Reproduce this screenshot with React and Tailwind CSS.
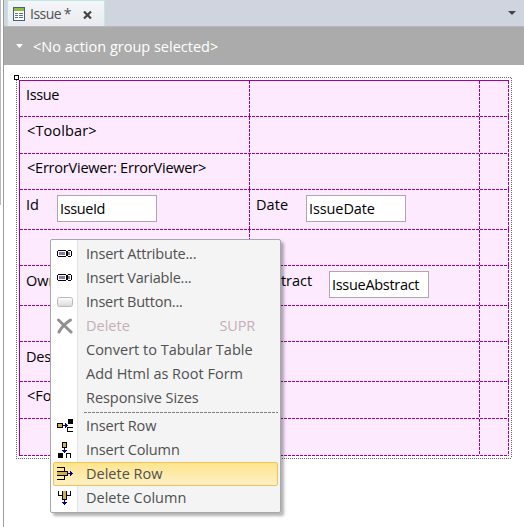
const COLS = 'grid grid-cols-[230px_230px_29px]';

const H_DASH = 'bg-[repeating-linear-gradient(90deg,#a000a0_0_3px,transparent_3px_4px)]';
const V_DASH = 'bg-[repeating-linear-gradient(180deg,#a000a0_0_3px,transparent_3px_4px)]';

function Cell({ children }) {
  return (
    <div className="flex min-w-0">
      <div className="flex min-w-0 flex-1 items-start">{children}</div>
      <div className={`w-px shrink-0 ${V_DASH}`} />
    </div>
  );
}

function Row({ height, left, right }) {
  return (
    <div className={`flex flex-col ${height}`}>
      <div className={`${COLS} min-h-0 flex-1`}>
        <Cell>{left}</Cell>
        <Cell>{right}</Cell>
        <Cell />
      </div>
      <div className={`h-px shrink-0 ${H_DASH}`} />
    </div>
  );
}

function Label({ className = '', children }) {
  return <span className={`ml-[6px] mt-[4px] whitespace-nowrap leading-[20px] ${className}`}>{children}</span>;
}

function Field({ className = '', children }) {
  return (
    <div className={`mt-[5px] h-[27px] w-[100px] shrink-0 whitespace-nowrap border border-[#aba6b0] bg-white pl-[2px] leading-[25px] ${className}`}>
      {children}
    </div>
  );
}

const VariableIcon = () => (
  <svg width="16" height="16" shapeRendering="crispEdges">
    <path d="M1 4h8v1H1zM1 10h8v1H1zM0 5h1v5H0zM9 5h1v5H9zM11 4h3v1h-3zM11 10h3v1h-3zM10 5h1v5h-1zM14 5h1v5h-1z" fill="#000" />
    <path d="M1 5h8v5H1zM11 5h3v5h-3z" fill="#fff" />
    <path d="M2 6h6v3H2zM11 6h2v3h-2z" fill="#8179a6" />
  </svg>
);

const ButtonIcon = () => (
  <svg width="17" height="16">
    <defs>
      <linearGradient id="btn" x1="0" y1="0" x2="0" y2="1">
        <stop offset="0" stopColor="#fff" />
        <stop offset="1" stopColor="#d9d9d9" />
      </linearGradient>
    </defs>
    <rect x="0.5" y="3.5" width="15" height="9" rx="2" fill="url(#btn)" stroke="#b9b9b9" />
  </svg>
);

const DeleteIcon = () => (
  <svg width="16" height="16">
    <path d="M1.5 2L14 14M13.5 2C9 5 4 10 2 14" stroke="#919191" strokeWidth="3" strokeLinecap="round" fill="none" />
  </svg>
);

const InsertRowIcon = () => (
  <svg width="17" height="16" shapeRendering="crispEdges">
    <path d="M0 5h6v5H0z" fill="#000" />
    <path d="M1 6h4v3H1z" fill="#d6ae49" />
    <path d="M6 7h5v1H6zM8 5h1v5H8zM9 6h1v3H9z" fill="#00008b" />
    <path d="M11 1h5v5h-5zM10 9h6v1h-6zM10 13h6v1h-6zM10 9h1v5h-1z" fill="#000" />
  </svg>
);

const InsertColumnIcon = () => (
  <svg width="16" height="18" shapeRendering="crispEdges">
    <path d="M5 1h5v6H5z" fill="#000" />
    <path d="M6 2h3v4H6z" fill="#d6ae49" />
    <path d="M7 7h1v5H7zM5 9h5v1H5zM6 10h3v1H6z" fill="#00008b" />
    <path d="M1 12h5v5H1zM9 12h4v1H9zM9 12h1v5H9zM13 12h1v5h-1z" fill="#000" />
  </svg>
);

const DeleteRowIcon = () => (
  <svg width="17" height="16" shapeRendering="crispEdges">
    <path d="M0 1h8v1H0zM7 1h1v4H7zM0 5h11v1H0zM0 9h11v1H0zM10 5h1v5h-1zM7 10h1v4H7zM0 13h8v1H0z" fill="#000" />
    <path d="M0 6h10v3H0z" fill="#d6ae49" />
    <path d="M11 7h5v1h-5zM13 5h1v5h-1zM14 6h1v3h-1z" fill="#00008b" />
  </svg>
);

const DeleteColumnIcon = () => (
  <svg width="16" height="16" shapeRendering="crispEdges">
    <path d="M1 1h1v5H1zM1 5h4v1H1zM5 1h1v9H5zM9 1h1v9H9zM5 9h5v1H5zM10 5h4v1h-4zM13 1h1v5h-1z" fill="#000" />
    <path d="M6 1h3v8H6z" fill="#d6ae49" />
    <path d="M7 10h1v5H7zM5 12h5v1H5zM6 13h3v1H6z" fill="#00008b" />
  </svg>
);

function MenuItem({ icon, label, shortcut, active, disabled, tracking = '' }) {
  return (
    <div
      className={`flex h-6 items-center ${
        active ? 'rounded-[2px] border border-[#eec254] bg-gradient-to-b from-[#ffe58d] to-[#fdf0c4] px-0' : 'px-px'
      } ${disabled ? 'text-[#c7adb9]' : 'text-[#505050]'}`}
    >
      <div className="flex w-8 items-center pl-[3px]">{icon}</div>
      <span className={`whitespace-nowrap leading-[20px] ${tracking}`}>{label}</span>
      {shortcut && <span className="ml-auto mr-[22px] leading-[20px] tracking-[-0.2px]">{shortcut}</span>}
    </div>
  );
}

function ContextMenu() {
  return (
    <div className="absolute left-[50px] top-[239px] h-[274px] w-[231px] rounded-[2px] border border-[#a3a7ae] bg-[linear-gradient(90deg,#fff_0_26px,#e3e4e6_26px_27px,#f4f4f4_27px)] px-[2px] pt-[2px] shadow-[3px_3px_3px_rgba(0,0,0,0.3)]">
      <MenuItem icon={<VariableIcon />} label="Insert Attribute..." tracking="tracking-[-0.22px]" />
      <MenuItem icon={<VariableIcon />} label="Insert Variable..." tracking="tracking-[-0.22px]" />
      <MenuItem icon={<ButtonIcon />} label="Insert Button..." tracking="tracking-[-0.25px]" />
      <MenuItem icon={<DeleteIcon />} label="Delete" shortcut="SUPR" disabled />
      <MenuItem label="Convert to Tabular Table" />
      <MenuItem label="Add Html as Root Form" />
      <MenuItem label="Responsive Sizes" tracking="tracking-[-0.06px]" />
      <div className="flex h-1 items-center pl-[31px]">
        <div className="h-px flex-1 bg-[repeating-linear-gradient(90deg,#808080_0_3px,transparent_3px_4px)]" />
      </div>
      <MenuItem icon={<InsertRowIcon />} label="Insert Row" tracking="tracking-[-0.15px]" />
      <MenuItem icon={<InsertColumnIcon />} label="Insert Column" tracking="tracking-[-0.15px]" />
      <MenuItem icon={<DeleteRowIcon />} label="Delete Row" active />
      <MenuItem icon={<DeleteColumnIcon />} label="Delete Column" />
    </div>
  );
}

function FormIcon() {
  return (
    <svg width="12" height="14" shapeRendering="crispEdges" className="shrink-0">
      <path d="M0 0h12v14H0z" fill="#3f6288" />
      <path d="M1 4h10v9H1z" fill="#fff" />
      <path d="M1 1h10v3H1z" fill="#91bd35" />
      <path d="M2 6h3v1H2zM2 8h3v1H2zM2 10h3v1H2zM6 6h4v1H6zM6 8h4v1H6zM6 10h4v1H6z" fill="#5b7190" />
    </svg>
  );
}

export default function App() {
  return (
    <div className="relative flex h-[527px] w-[524px] overflow-hidden bg-white font-['Open_Sans','Noto_Sans',sans-serif] text-[14.5px] text-black">
      <div className="flex w-[3px] shrink-0 flex-col">
        <div className="h-[205px] border-l border-[#b9b9b9]" />
      </div>
      <div className="flex min-w-0 flex-1 flex-col border-l border-[#9b9b9b]">
        <div className="flex h-[26px] shrink-0 justify-between bg-[#d0d4de]">
          <div className="ml-[3px] flex w-[98px] items-center rounded-t-[2px] border-x border-t border-[#c2e8e6] bg-gradient-to-b from-[#f5f6f9] to-[#e9ebf0] pl-[5px]">
            <FormIcon />
            <span className="ml-[5px] mt-px text-[14px] leading-[24px] tracking-[-0.5px] text-[#505050]">Issue</span>
            <span className="ml-[2.5px] mt-px text-[14px] leading-[24px] text-[#505050]">*</span>
            <svg width="9" height="8" className="ml-auto mr-[12px] mt-[2px]">
              <path d="M1 0.5L8 7.5M8 0.5L1 7.5" stroke="#444" strokeWidth="2.2" />
            </svg>
          </div>
          <svg width="8" height="4" className="mr-[8px] mt-[11px]">
            <path d="M0 0h8L4 4z" fill="#444" />
          </svg>
        </div>
        <div className="flex h-[39px] shrink-0 items-center border-t border-[#b9b9b9] bg-[#ababab] text-white">
          <svg width="8" height="4" className="ml-3">
            <path d="M0 0h7L3.5 4z" fill="#fff" />
          </svg>
          <span className="ml-[9px] mt-[2px] leading-[20px]">&lt;No action group selected&gt;</span>
        </div>
        <div className="relative ml-3 mt-3 flex h-[382px] w-[496px] flex-col">
          <div className="h-px shrink-0 bg-[repeating-linear-gradient(90deg,#666_0_1px,transparent_1px_2px)]" />
          <div className="flex min-h-0 flex-1">
            <div className="w-px bg-[repeating-linear-gradient(180deg,#666_0_1px,transparent_1px_2px)]" />
            <div className="flex flex-1 flex-col p-[2px]">
              <div className="flex flex-col border-l border-t border-[#a000a0] bg-[#fdeaff]">
                <Row height="h-[36px]" left={<Label className="tracking-[-0.4px]">Issue</Label>} />
                <Row height="h-[37px]" left={<Label className="pl-px tracking-[0.12px]">&lt;Toolbar&gt;</Label>} />
                <Row height="h-[36px]" left={<Label className="pl-px tracking-[-0.22px]">&lt;ErrorViewer: ErrorViewer&gt;</Label>} />
                <Row
                  height="h-[40px]"
                  left={<><Label className="w-[31px] pt-px">Id</Label><Field className="tracking-[-0.4px]">IssueId</Field></>}
                  right={<><Label className="w-[50px] pt-px tracking-[0.1px]">Date</Label><Field className="tracking-[-0.1px]">IssueDate</Field></>}
                />
                <Row height="h-[36px]" />
                <Row
                  height="h-[40px]"
                  left={<Label className="pt-px">Own</Label>}
                  right={<><Label className="w-[73px] pt-px">Abstract</Label><Field className="tracking-[-0.3px]">IssueAbstract</Field></>}
                />
                <Row height="h-[36px]" />
                <Row height="h-[40px]" left={<Label className="pt-px tracking-[-0.2px]">Desc</Label>} />
                <Row height="h-[37px]" left={<Label className="pl-px">&lt;For</Label>} />
                <Row height="h-[37px]" />
              </div>
            </div>
            <div className="w-px bg-[repeating-linear-gradient(180deg,#666_0_1px,transparent_1px_2px)]" />
          </div>
          <div className="h-px shrink-0 bg-[repeating-linear-gradient(90deg,#666_0_1px,transparent_1px_2px)]" />
          <div className="absolute -left-[2px] -top-[2px] size-[5px] border border-black bg-white" />
        </div>
      </div>
      <ContextMenu />
    </div>
  );
}
